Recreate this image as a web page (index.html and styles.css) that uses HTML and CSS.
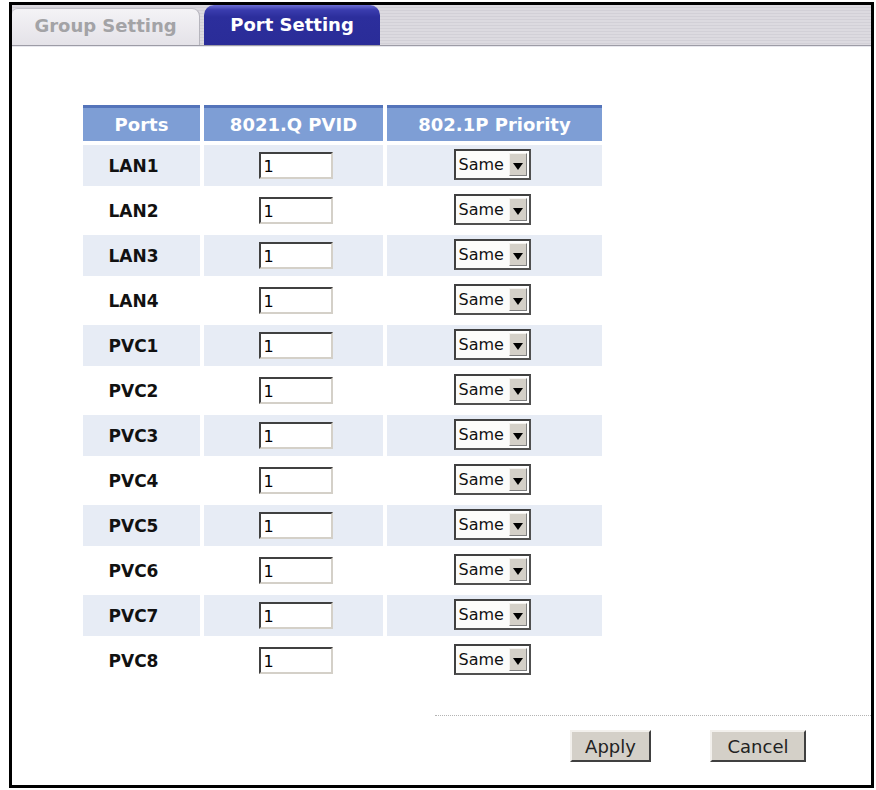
FILE: index.html
```html
<!DOCTYPE html>
<html lang="en">
<head>
    <meta charset="UTF-8">
    <title>Port Setting</title>
    <link rel="stylesheet" href="styles.css">
</head>
<body>
    <div class="frame">
        <div class="tabs">
            <a class="tab tab-off" href="#">Group Setting</a>
            <a class="tab tab-on" href="#">Port Setting</a>
            <div class="tab-rest"></div>
        </div>

        <div class="content">
            <table class="ports">
                <tr>
                    <th class="col-port">Ports</th>
                    <th class="col-pvid">8021.Q PVID</th>
                    <th class="col-prio">802.1P Priority</th>
                </tr>
                <tr class="odd"><td class="name">LAN1</td><td><input class="pvid" type="text" value="1"></td><td><span class="select"><span class="select-val">Same</span><span class="select-btn"></span></span></td></tr>
                <tr><td class="name">LAN2</td><td><input class="pvid" type="text" value="1"></td><td><span class="select"><span class="select-val">Same</span><span class="select-btn"></span></span></td></tr>
                <tr class="odd"><td class="name">LAN3</td><td><input class="pvid" type="text" value="1"></td><td><span class="select"><span class="select-val">Same</span><span class="select-btn"></span></span></td></tr>
                <tr><td class="name">LAN4</td><td><input class="pvid" type="text" value="1"></td><td><span class="select"><span class="select-val">Same</span><span class="select-btn"></span></span></td></tr>
                <tr class="odd"><td class="name">PVC1</td><td><input class="pvid" type="text" value="1"></td><td><span class="select"><span class="select-val">Same</span><span class="select-btn"></span></span></td></tr>
                <tr><td class="name">PVC2</td><td><input class="pvid" type="text" value="1"></td><td><span class="select"><span class="select-val">Same</span><span class="select-btn"></span></span></td></tr>
                <tr class="odd"><td class="name">PVC3</td><td><input class="pvid" type="text" value="1"></td><td><span class="select"><span class="select-val">Same</span><span class="select-btn"></span></span></td></tr>
                <tr><td class="name">PVC4</td><td><input class="pvid" type="text" value="1"></td><td><span class="select"><span class="select-val">Same</span><span class="select-btn"></span></span></td></tr>
                <tr class="odd"><td class="name">PVC5</td><td><input class="pvid" type="text" value="1"></td><td><span class="select"><span class="select-val">Same</span><span class="select-btn"></span></span></td></tr>
                <tr><td class="name">PVC6</td><td><input class="pvid" type="text" value="1"></td><td><span class="select"><span class="select-val">Same</span><span class="select-btn"></span></span></td></tr>
                <tr class="odd"><td class="name">PVC7</td><td><input class="pvid" type="text" value="1"></td><td><span class="select"><span class="select-val">Same</span><span class="select-btn"></span></span></td></tr>
                <tr><td class="name">PVC8</td><td><input class="pvid" type="text" value="1"></td><td><span class="select"><span class="select-val">Same</span><span class="select-btn"></span></span></td></tr>
            </table>

            <div class="dots"></div>
            <div class="buttons">
                <button class="btn btn-apply">Apply</button>
                <button class="btn btn-cancel">Cancel</button>
            </div>
        </div>
    </div>
</body>
</html>
```

FILE: styles.css
```css
body {
    margin: 0;
    padding: 0;
    background-color: #fff;
    font-family: "DejaVu Sans", Verdana, sans-serif;
}

.frame {
    box-sizing: border-box;
    width: 865px;
    height: 786px;
    margin: 2px 0 0 9px;
    border: 3px solid #000;
    background-color: #fff;
    display: flex;
    flex-direction: column;
}

/* tab bar */
.tabs {
    display: flex;
    align-items: flex-end;
    height: 40px;
    background: repeating-linear-gradient(#dcdae0 0, #dcdae0 2px, #d2d0d7 2px, #d2d0d7 3px);
    border-bottom: 1px solid #9d9ca6;
    box-shadow: 0 1px 0 #e8e8ee;
}

.tab {
    box-sizing: border-box;
    display: flex;
    align-items: center;
    justify-content: center;
    font-size: 18px;
    font-weight: bold;
    text-decoration: none;
}

.tab-off {
    width: 188px;
    height: 37px;
    color: #a3a3a6;
    background: linear-gradient(#f4f3f6, #e4e2e8);
    border-top: 1px solid #c4c3ca;
    border-right: 1px solid #b6b5bd;
    border-radius: 6px 8px 0 0;
    margin-right: 4px;
    padding-bottom: 4px;
}

.tab-on {
    width: 176px;
    height: 40px;
    color: #fff;
    background: linear-gradient(#6c6ed2 0, #3a3cae 5px, #2c2e9c 12px, #2a2c98 100%);
    border-radius: 10px 10px 0 0;
    padding-bottom: 2px;
}

.tab-rest {
    flex: 1;
}

/* table */
.content {
    flex: 1;
    display: flex;
    flex-direction: column;
    padding-top: 55px;
}

.ports {
    align-self: flex-start;
    table-layout: fixed;
    border-spacing: 4px;
    margin-left: 67px;
}

.ports th {
    height: 33px;
    padding: 0;
    color: #fff;
    font-size: 18px;
    font-weight: bold;
    white-space: nowrap;
    background-color: #7e9ed5;
    border-top: 3px solid #5474ba;
}

.col-port { width: 117px; }
.col-pvid { width: 179px; }
.col-prio { width: 215px; }

.ports td {
    height: 41px;
    padding: 0;
    text-align: center;
    vertical-align: middle;
}

.ports tr.odd td {
    background-color: #e7ecf5;
}

.ports td.name {
    padding-right: 16px;
    font-size: 17px;
    font-weight: bold;
    color: #111;
}

.pvid {
    box-sizing: border-box;
    width: 74px;
    height: 27px;
    margin: 0 0 0 4px;
    padding: 2px 3px 0;
    vertical-align: middle;
    font-family: "DejaVu Sans", Verdana, sans-serif;
    font-size: 16px;
    color: #000;
    background-color: #fff;
    border: 2px solid;
    border-color: #404040 #d4d0c8 #d4d0c8 #404040;
    outline: none;
}

.select {
    box-sizing: border-box;
    display: inline-flex;
    align-items: stretch;
    width: 77px;
    height: 31px;
    margin: -3px 0 0 -5px;
    vertical-align: middle;
    border: 2px solid;
    border-color: #404040 #505050 #505050 #404040;
    background-color: #fff;
}

.select-val {
    flex: 1;
    display: flex;
    align-items: center;
    padding-left: 3px;
    font-size: 16px;
    color: #111;
    background-color: #fcfcfa;
}

.select-btn {
    box-sizing: border-box;
    width: 18px;
    margin: 2px 2px 2px 0;
    background-color: #d4d0c8;
    border: 1px solid;
    border-color: #f4f2ee #808080 #808080 #f4f2ee;
    position: relative;
}

.select-btn::after {
    content: "";
    position: absolute;
    left: 3px;
    top: 9px;
    border-left: 5px solid transparent;
    border-right: 5px solid transparent;
    border-top: 7px solid #000;
}

/* buttons */
.dots {
    width: 436px;
    margin: 30px 0 0 auto;
    border-top: 1px dotted #b4b4b4;
}

.buttons {
    display: flex;
    justify-content: flex-end;
    gap: 59px;
    margin-top: 14px;
    padding-right: 65px;
}

.btn {
    box-sizing: border-box;
    height: 32px;
    padding: 0;
    font-family: "DejaVu Sans", Verdana, sans-serif;
    font-size: 18px;
    color: #222;
    background-color: #d4d0c8;
    border: 2px solid;
    border-color: #f2f0ec #404040 #404040 #f2f0ec;
}

.btn-apply { width: 81px; }
.btn-cancel { width: 96px; }
```
